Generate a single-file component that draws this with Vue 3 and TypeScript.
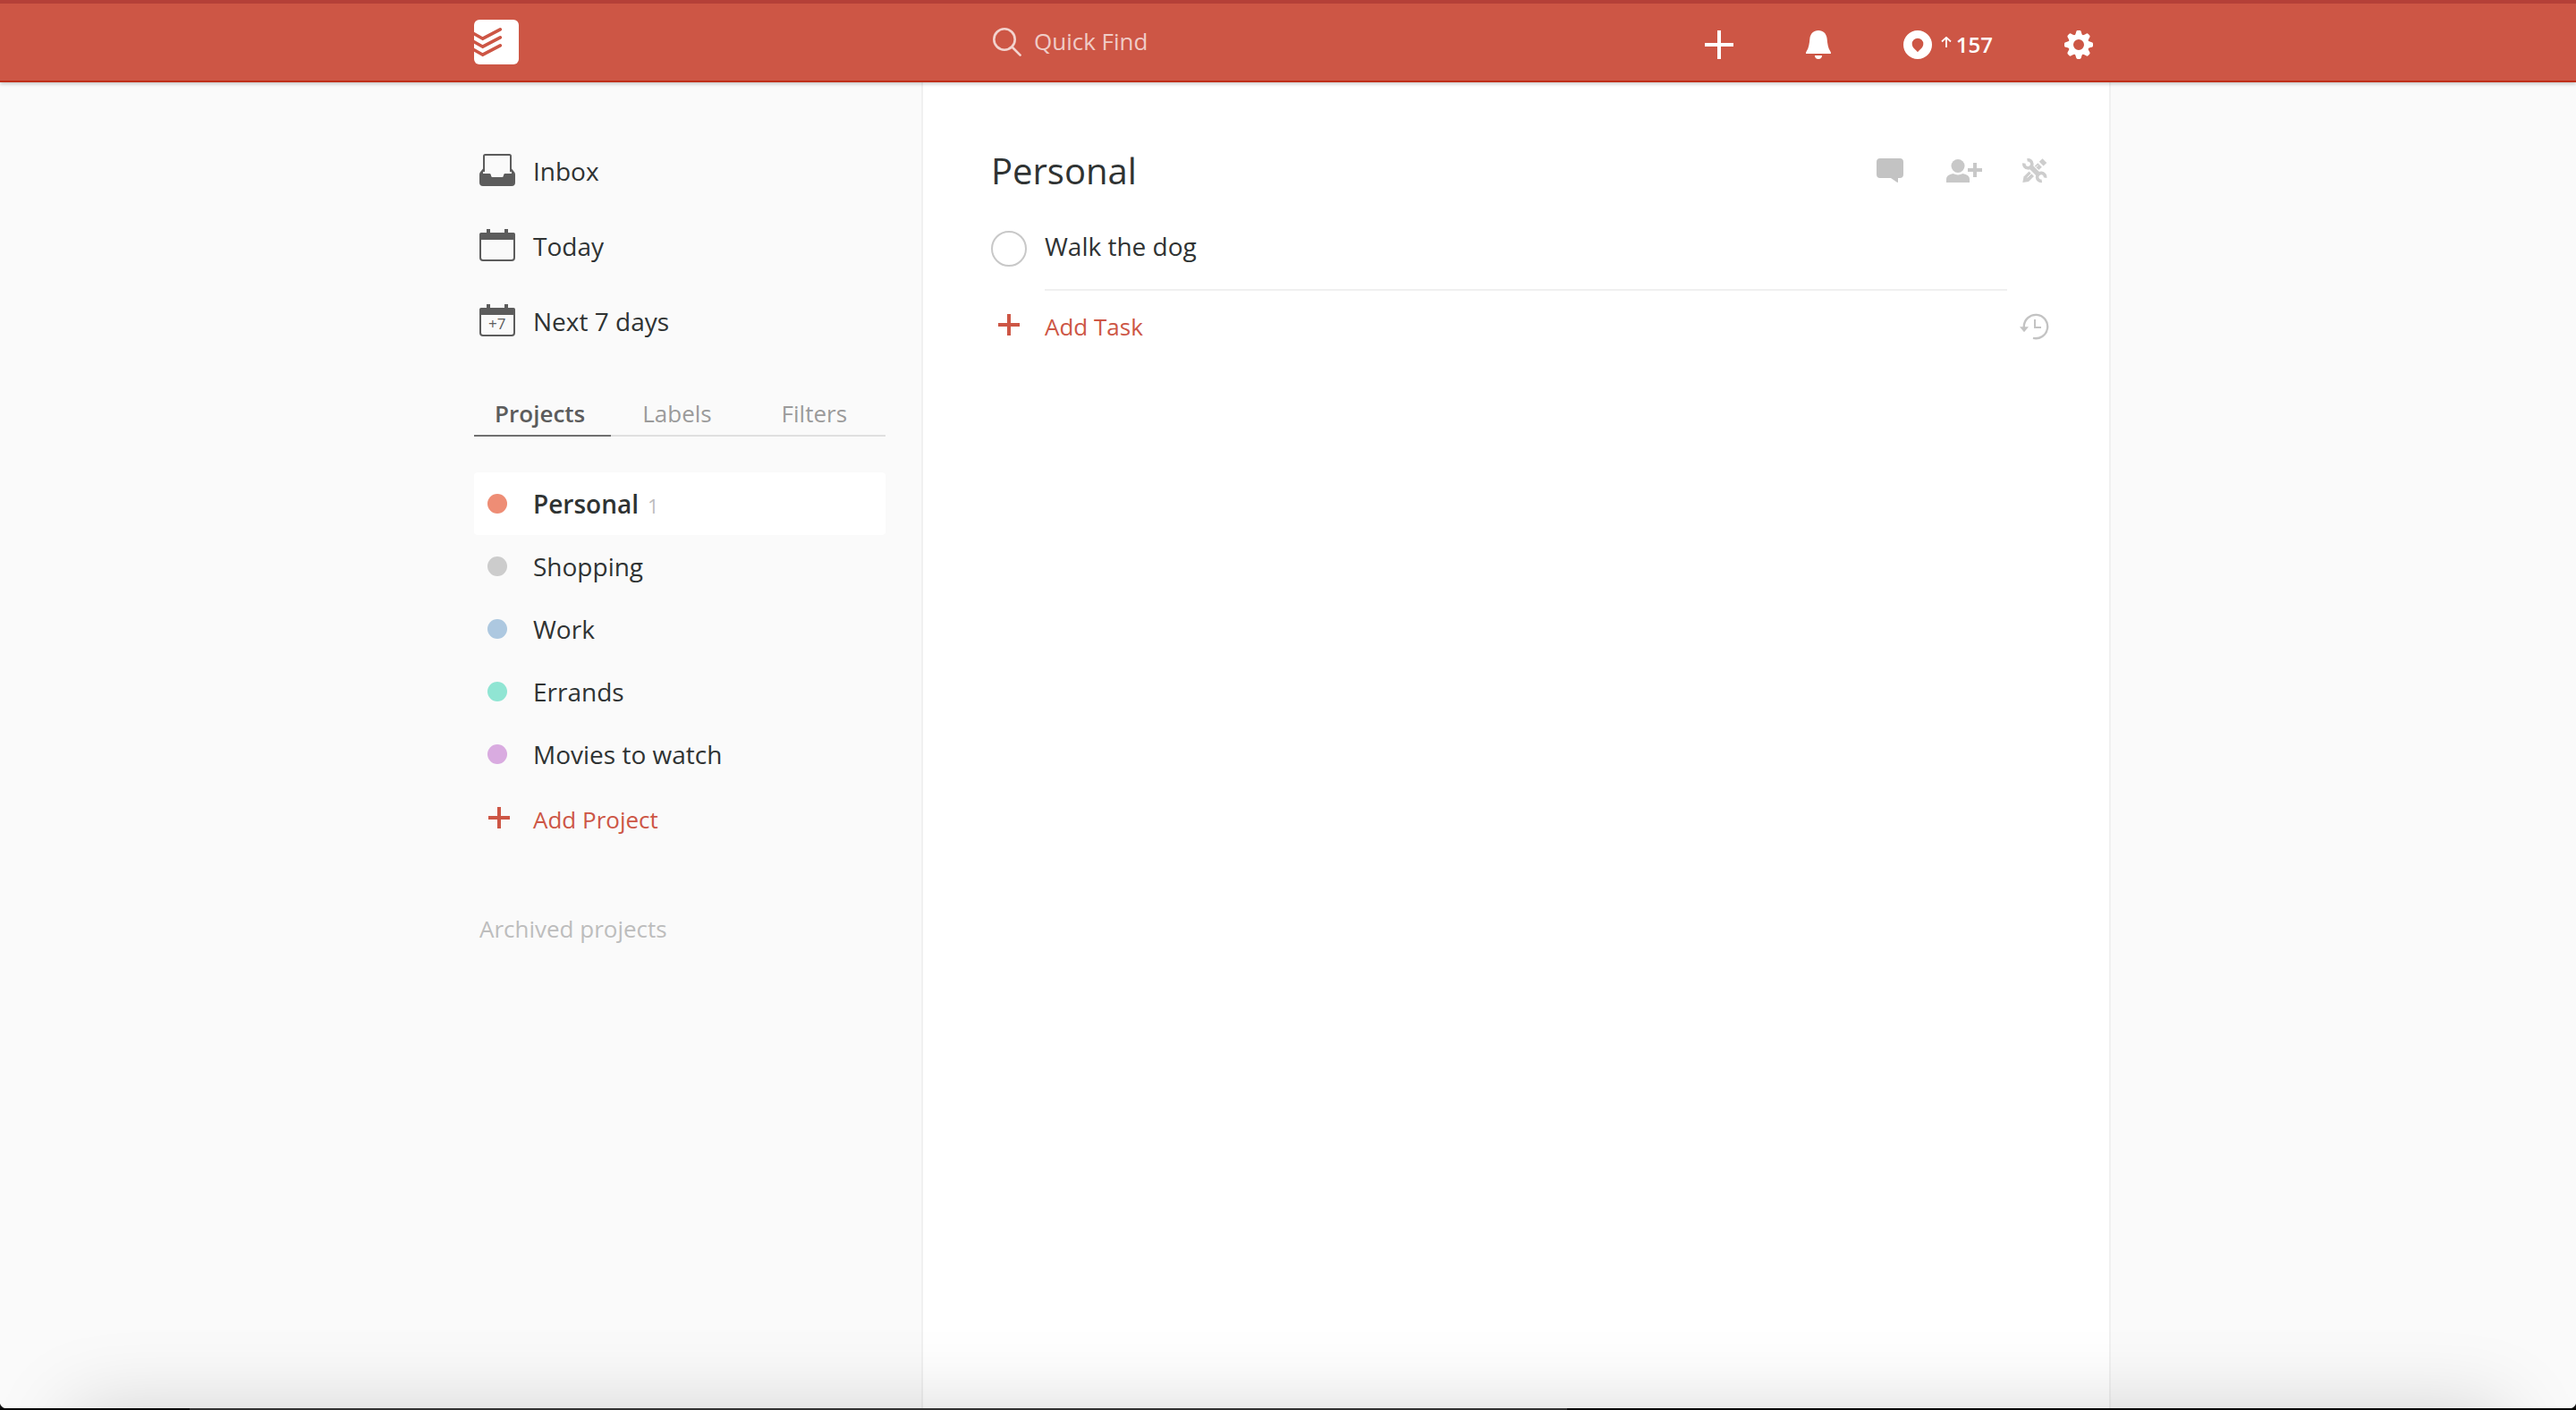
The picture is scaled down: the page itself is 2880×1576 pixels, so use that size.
<script setup lang="ts">
import { ref } from 'vue'

interface Project {
  name: string
  color: string
  count?: number
}

const projects: Project[] = [
  { name: 'Personal', color: '#ee8d75', count: 1 },
  { name: 'Shopping', color: '#cccccc' },
  { name: 'Work', color: '#adc8e0' },
  { name: 'Errands', color: '#90e5d3' },
  { name: 'Movies to watch', color: '#d9abe0' },
]

const tabs = ['Projects', 'Labels', 'Filters']
const activeTab = ref('Projects')
const activeProject = ref('Personal')
const query = ref('')
const done = ref(false)
const teeth = [0, 45, 90, 135, 180, 225, 270, 315]
</script>

<template>
  <div class="app">
    <header class="topbar">
      <div class="topbar-inner">
        <a class="logo" href="#" aria-label="Todoist">
          <svg width="50" height="50" viewBox="0 0 50 50">
            <rect width="50" height="50" rx="6" fill="#fff" />
            <g fill="none" stroke="#cd5645" stroke-width="3.6" stroke-linecap="round">
              <path d="M-2 14.6 9.7 21.2 29.3 10.8" />
              <path d="M-2 23.6 9.7 30.2 29.3 19.8" />
              <path d="M-2 32.6 9.7 39.2 29.3 28.8" />
            </g>
          </svg>
        </a>
        <div class="search">
          <label for="quick-find" aria-label="Quick Find">
            <svg width="32" height="32" viewBox="0 0 32 32" fill="none" stroke="#f3d3ce" stroke-width="2.6">
              <circle cx="13" cy="13" r="11.7" />
              <path d="M21.5 21.5 30.6 30.6" stroke-linecap="round" />
            </svg>
          </label>
          <input id="quick-find" v-model="query" type="text" placeholder="Quick Find" />
        </div>
        <div class="actions">
          <button type="button" aria-label="Quick add">
            <svg width="32" height="32" viewBox="0 0 32 32" fill="#fff">
              <path d="M14 0h4v14h14v4H18v14h-4V18H0v-4h14z" />
            </svg>
          </button>
          <button type="button" aria-label="Notifications">
            <svg width="30" height="32" viewBox="-1 0 30 32" fill="#fff">
              <path d="M14 0C8.5 0 5 3.8 4.4 9 3.8 15 3.3 19.5 .6 23.6Q0 24.6 0 26H28Q28 24.6 27.4 23.6C24.7 19.5 24.2 15 23.6 9 23 3.8 19.5 0 14 0Z" />
              <path d="M10 28H18C18 30.5 16.5 32 14 32S10 30.5 10 28Z" />
            </svg>
          </button>
          <button type="button" class="karma" aria-label="Karma 157">
            <svg width="32" height="32" viewBox="0 0 32 32" fill="#fff">
              <path
                fill-rule="evenodd"
                d="M16 0A16 16 0 1 1 16 32 16 16 0 0 1 16 0ZM16 24.3C14 21.6 9.7 19.5 9.7 15A6.3 6.3 0 0 1 22.3 15C22.3 19.5 18 21.6 16 24.3Z"
              />
            </svg>
            <svg class="trend" width="12" height="12" viewBox="0 0 12 12" fill="none" stroke="#fff" stroke-width="1.8">
              <path d="M6 12V1M1 5.5 6 .9 11 5.5" />
            </svg>
            <span>157</span>
          </button>
          <button type="button" aria-label="Settings">
            <svg width="32" height="32" viewBox="-16 -16 32 32" fill="#fff">
              <circle r="8.7" fill="none" stroke="#fff" stroke-width="5.4" />
              <path
                v-for="angle in teeth"
                :key="angle"
                :transform="`rotate(${angle})`"
                d="M-5.5 -9C-3.6 -11.2 -3.3 -12.5 -2.8 -14.6Q-2.4 -16 -1.2 -16H1.2Q2.4 -16 2.8 -14.6C3.3 -12.5 3.6 -11.2 5.5 -9Z"
              />
            </svg>
          </button>
        </div>
      </div>
    </header>

    <div class="layout">
      <aside class="sidebar">
        <nav class="views" aria-label="Views">
          <a href="#">
            <svg width="40" height="36" viewBox="0 0 40 36">
              <path d="M5 20V2.5Q5 1 6.5 1H33.5Q35 1 35 2.5V20" fill="none" stroke="#5c5c5c" stroke-width="2" />
              <path
                fill="#5c5c5c"
                d="M4 16.5 .8 20.5Q0 21.5 0 23V32Q0 36 4 36H36Q40 36 40 32V23Q40 21.5 39.2 20.5L36 16.5V22H28.5C26.5 22 27.5 26 25.5 26H14.5C12.5 26 13.5 22 11.5 22H4Z"
              />
            </svg>
            <span>Inbox</span>
          </a>
          <a href="#">
            <svg width="40" height="36" viewBox="0 0 40 36">
              <rect x="1" y="5" width="38" height="30" rx="3" fill="none" stroke="#5c5c5c" stroke-width="2" />
              <path d="M0 12V6Q0 4 2 4H8V0H12V4H28V0H32V4H38Q40 4 40 6V12Z" fill="#5c5c5c" />
            </svg>
            <span>Today</span>
          </a>
          <a href="#">
            <svg width="40" height="36" viewBox="0 0 40 36">
              <rect x="1" y="5" width="38" height="30" rx="3" fill="none" stroke="#5c5c5c" stroke-width="2" />
              <path d="M0 12V6Q0 4 2 4H8V0H12V4H28V0H32V4H38Q40 4 40 6V12Z" fill="#5c5c5c" />
              <text class="cal-text" x="10" y="28">+7</text>
            </svg>
            <span>Next 7 days</span>
          </a>
        </nav>

        <div class="tabs" role="tablist">
          <button
            v-for="tab in tabs"
            :key="tab"
            type="button"
            role="tab"
            :aria-selected="tab === activeTab"
            :class="{ active: tab === activeTab }"
            @click="activeTab = tab"
          >
            {{ tab }}
          </button>
        </div>

        <ul class="projects">
          <li v-for="project in projects" :key="project.name">
            <a
              href="#"
              :class="{ active: project.name === activeProject }"
              @click.prevent="activeProject = project.name"
            >
              <span class="lead"><span class="dot" :style="{ background: project.color }"></span></span>
              <span class="name">{{ project.name }}</span>
              <span v-if="project.count" class="count">{{ project.count }}</span>
            </a>
          </li>
        </ul>

        <button type="button" class="add add-project">
          <span class="lead">
            <svg width="28" height="24" viewBox="-4 0 28 24" fill="#cd5645">
              <path d="M10 0h4v10h10v4H14v10h-4V14H0v-4h10z" />
            </svg>
          </span>
          <span>Add Project</span>
        </button>

        <a class="archived" href="#">Archived projects</a>
      </aside>

      <main class="content">
        <div class="title-row">
          <h1>Personal</h1>
          <div class="tools">
            <button type="button" aria-label="Comments">
              <svg width="36" height="28" viewBox="0 0 36 28" fill="#c3c3c3">
                <path d="M4 0H26Q30 0 30 4V18Q30 22 26 22H24V27L22.5 26.6 16 22H4Q0 22 0 18V4Q0 0 4 0Z" />
              </svg>
            </button>
            <button type="button" aria-label="Share project">
              <svg width="40" height="26" viewBox="0 0 40 26" fill="#c8c8c8">
                <circle cx="13" cy="7.5" r="7.5" />
                <path d="M0 26V22Q0 17.5 7.5 16Q13 18.8 18.5 16Q26 17.5 26 22V26Z" />
                <path d="M30 4h4v6h6v4h-6v6h-4v-6h-6v-4h6z" />
              </svg>
            </button>
            <button type="button" aria-label="Project actions">
              <svg width="34" height="28" viewBox="-3 0 34 28">
                <g fill="#cdcdcd">
                  <path d="M.3 27 1.5 20.5 7.5 14.5 13 20 7 26Z" />
                  <path d="M13.5 9 17.3 5.2 21.8 9.7 18.5 13Z" />
                  <path d="M18.8 3.8 22.5 .2 27.3 5 23.6 8.6Z" />
                </g>
                <path d="M5.5 21.5 10 17M15.5 9.8 17.5 7.8" stroke="#fff" stroke-width="1" />
                <path d="M8.5 8.5 19 19" stroke="#fff" stroke-width="7.4" />
                <g fill="none" stroke="#cdcdcd">
                  <path d="M8.5 8.5 19 19" stroke-width="5.5" />
                  <path d="M5.5 1.9A4.5 4.5 0 1 1 1.9 5.5M21.8 25.3A4.5 4.5 0 1 1 25.5 21.7" stroke-width="3.6" />
                </g>
              </svg>
            </button>
          </div>
        </div>

        <div class="task">
          <input id="task-1" v-model="done" type="checkbox" />
          <label for="task-1">Walk the dog</label>
        </div>

        <div class="footer-row">
          <button type="button" class="add">
            <span class="lead">
              <svg width="24" height="24" viewBox="0 0 24 24" fill="#cd5645">
                <path d="M10 0h4v10h10v4H14v10h-4V14H0v-4h10z" />
              </svg>
            </span>
            <span>Add Task</span>
          </button>
          <button type="button" aria-label="Show completed tasks">
            <svg width="34" height="30" viewBox="0 0 34 30">
              <path d="M4.8 16V15A13.2 13.2 0 1 1 15 27.9" fill="none" stroke="#c3c3c3" stroke-width="2.4" />
              <path d="M0 15.3H10L5 21.2Z" fill="#c3c3c3" />
              <path d="M17 7V16H24" fill="none" stroke="#c3c3c3" stroke-width="2" />
            </svg>
          </button>
        </div>
      </main>
    </div>

    <div class="window-edge" aria-hidden="true"></div>
  </div>
</template>

<style>
body {
  margin: 0;
  background: #fafafa;
}
</style>

<style scoped>
.app {
  display: flex;
  flex-direction: column;
  min-height: 100vh;
  background: #fafafa;
  color: #2f3333;
  font-family: 'Open Sans', sans-serif;
  font-size: 28px;
  line-height: 38px;
}

.app *,
.app *::before {
  box-sizing: border-box;
}

a {
  color: inherit;
  text-decoration: none;
}

button {
  display: flex;
  align-items: center;
  margin: 0;
  padding: 0;
  border: 0;
  background: none;
  color: inherit;
  font: inherit;
  cursor: pointer;
}

svg {
  display: block;
  flex: none;
}

.topbar {
  position: relative;
  z-index: 1;
  border-top: 4px solid #b44038;
  border-bottom: 2px solid #bf2f1a;
  background: #cd5645;
  box-shadow: 0 2px 4px rgba(0, 0, 0, 0.2);
}

.topbar-inner {
  display: flex;
  align-items: center;
  width: 100%;
  max-width: 1840px;
  height: 86px;
  margin: 0 auto;
  padding: 0 20px 0 10px;
}

.logo {
  flex: 0 0 580px;
}

.search {
  display: flex;
  flex: 1;
  align-items: center;
  gap: 14px;
}

.search input {
  width: 400px;
  height: 36px;
  padding: 0 0 2px;
  border: 0;
  outline: 0;
  background: none;
  color: #fff;
  font: inherit;
  font-size: 26px;
}

.search input::placeholder {
  color: #f0ccc7;
  opacity: 1;
}

.actions {
  display: flex;
  align-items: center;
  gap: 80px;
  padding-top: 6px;
}

.karma {
  color: #fff;
  font-size: 24px;
  font-weight: 600;
  line-height: 32px;
}

.trend {
  margin: 0 5px 6px 10px;
}

.layout {
  display: flex;
  flex: 1;
  width: 100%;
  max-width: 1840px;
  margin: 0 auto;
}

.sidebar {
  flex: 0 0 510px;
  padding: 56px 40px 80px 10px;
}

.views a {
  display: flex;
  align-items: center;
  gap: 20px;
  height: 84px;
  padding-left: 6px;
}

.views span {
  padding-top: 2px;
}

.cal-text {
  fill: #5c5c5c;
  font-size: 17px;
}

.tabs {
  display: flex;
  margin-top: 44px;
}

.tabs button {
  flex: 1;
  justify-content: center;
  padding: 0 6px 6px 0;
  border-bottom: 2px solid #dfdfdf;
  color: #9b9b9b;
  font-size: 26px;
  line-height: 36px;
}

.tabs .active {
  border-color: #707070;
  color: #5c5c5c;
  font-weight: 600;
}

.projects {
  margin: 40px 0 0;
  padding: 0;
  list-style: none;
}

.projects a {
  display: flex;
  align-items: center;
  height: 70px;
  padding-left: 6px;
  border-radius: 4px;
}

.projects .active {
  background: #fff;
}

.projects .active .name {
  font-weight: 600;
}

.lead {
  display: flex;
  flex: none;
  justify-content: center;
  width: 40px;
  margin-right: 20px;
}

.dot {
  width: 22px;
  height: 22px;
  border-radius: 50%;
}

.count {
  margin-left: 10px;
  padding-top: 4px;
  color: #bdbdbd;
  font-size: 22px;
}

.add {
  color: #cd5645;
  font-size: 26px;
}

.add svg {
  margin-bottom: 4px;
}

.add-project {
  height: 76px;
  padding-left: 6px;
}

.archived {
  display: block;
  margin-top: 66px;
  padding-left: 6px;
  color: #bdbdbd;
  font-size: 26px;
  line-height: 36px;
}

.content {
  flex: 1;
  min-width: 0;
  padding: 71px 66px 80px 76px;
  border: solid #f0f0f0;
  border-width: 0 2px;
  background: #fff;
}

.title-row {
  display: flex;
  align-items: center;
  justify-content: space-between;
}

h1 {
  margin: 0;
  font-size: 40px;
  font-weight: 400;
  line-height: 56px;
}

.tools {
  display: flex;
  align-items: center;
  gap: 42px;
}

.task {
  display: flex;
  align-items: flex-start;
  gap: 20px;
  margin-top: 37px;
  padding-right: 48px;
}

.task input {
  flex: none;
  width: 40px;
  height: 40px;
  margin: 2px 0 0;
  border: 2px solid #c8c8c8;
  border-radius: 50%;
  appearance: none;
}

.task input:checked {
  background: #c8c8c8;
}

.task label {
  flex: 1;
  padding-bottom: 29px;
  border-bottom: 2px solid #f0f0f0;
}

.footer-row {
  display: flex;
  align-items: center;
  justify-content: space-between;
  height: 80px;
}

/* Shade and dark rim along the bottom of the window */
.window-edge {
  position: fixed;
  right: 0;
  bottom: 0;
  left: 0;
  z-index: 2;
  height: 96px;
  overflow: hidden;
  background:
    radial-gradient(circle at 8px 0, transparent 8px, #111 9px) left 0 bottom 2px / 8px 8px no-repeat,
    radial-gradient(circle at 0 0, transparent 8px, #111 9px) right 0 bottom 2px / 8px 8px no-repeat,
    linear-gradient(90deg, #050505 212px, #363636 212px, #363636 1752px, #050505 1752px) bottom / 100% 2px no-repeat;
  pointer-events: none;
}

.window-edge::before {
  position: absolute;
  top: 100%;
  right: 80px;
  left: 80px;
  height: 200px;
  box-shadow: 0 0 90px rgba(0, 0, 0, 0.17);
  content: '';
}
</style>
